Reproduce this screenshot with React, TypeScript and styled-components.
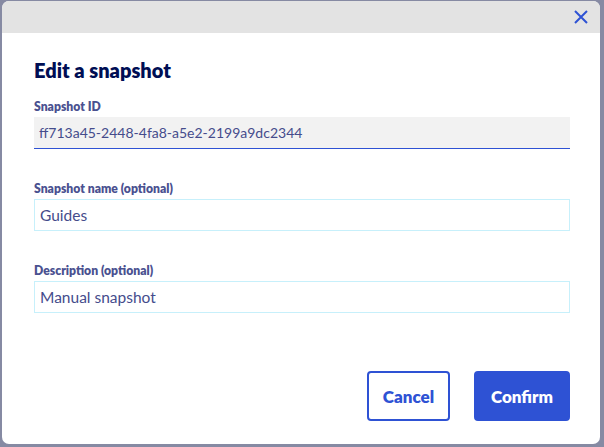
import styled, { createGlobalStyle } from "styled-components";

const GlobalStyle = createGlobalStyle`
  html, body {
    margin: 0;
    padding: 0;
    background: #868aa3;
  }
  body {
    font-family: Lato, "Noto Sans", sans-serif;
  }
  * {
    box-sizing: border-box;
  }
`;

const Backdrop = styled.div`
  width: 604px;
  height: 447px;
  padding: 1px 4px 3px 2px;
  background: #868aa3;
`;

const Modal = styled.div`
  width: 598px;
  height: 443px;
  background: #fff;
  border-radius: 7px;
  overflow: hidden;
  display: flex;
  flex-direction: column;
`;

const Header = styled.div`
  height: 32px;
  background: #e3e3e3;
  display: flex;
  justify-content: flex-end;
  align-items: center;
  padding-right: 10px;
`;

const CloseButton = styled.button`
  border: none;
  background: none;
  padding: 0;
  width: 18px;
  height: 18px;
  display: flex;
  align-items: center;
  justify-content: center;
  color: #2e52d4;
  cursor: pointer;
`;

const Body = styled.div`
  flex: 1;
  padding: 24px 30px 23px 32px;
  display: flex;
  flex-direction: column;
`;

const Title = styled.h2`
  margin: 0 0 17px;
  font-size: 20px;
  font-weight: 800;
  color: #000e54;
  line-height: 26px;
`;

const Field = styled.div`
  display: flex;
  flex-direction: column;
  margin-bottom: 33px;
`;

const Label = styled.label`
  font-size: 12.2px;
  font-weight: 800;
  color: #4a5190;
  line-height: 14px;
  margin-bottom: 3px;
`;

const Input = styled.input<{ $readOnly?: boolean }>`
  height: 32px;
  width: 100%;
  padding: 0 5px;
  font-family: inherit;
  font-size: ${(p) => (p.$readOnly ? "14px" : "15.5px")};
  color: #454c8c;
  outline: none;
  border-radius: 0;
  border-style: solid;
  border-width: ${(p) => (p.$readOnly ? "0 0 1px 0" : "1px")};
  border-color: ${(p) => (p.$readOnly ? "#2e52d4" : "#c7f0fb")};
  background: ${(p) => (p.$readOnly ? "#f2f2f2" : "#fff")};
`;

const Actions = styled.div`
  margin-top: auto;
  display: flex;
  justify-content: flex-end;
  gap: 24px;
`;

const Button = styled.button<{ $primary?: boolean }>`
  height: 50px;
  padding: 0 12px;
  border-radius: 4px;
  font-family: inherit;
  font-size: 17px;
  font-weight: 800;
  cursor: pointer;
  border: 2px solid #2e52d4;
  background: ${(p) => (p.$primary ? "#2e52d4" : "#fff")};
  color: ${(p) => (p.$primary ? "#fff" : "#2e52d4")};
  min-width: ${(p) => (p.$primary ? "96px" : "83px")};
`;

export default function App() {
  return (
    <>
      <GlobalStyle />
      <Backdrop>
        <Modal>
          <Header>
            <CloseButton aria-label="Close">
              <svg width="14" height="14" viewBox="0 0 14 14">
                <path d="M1 1L13 13M13 1L1 13" stroke="currentColor" strokeWidth="2" />
              </svg>
            </CloseButton>
          </Header>
          <Body>
            <Title>Edit a snapshot</Title>
            <Field>
              <Label>Snapshot ID</Label>
              <Input $readOnly readOnly value="ff713a45-2448-4fa8-a5e2-2199a9dc2344" />
            </Field>
            <Field>
              <Label>Snapshot name (optional)</Label>
              <Input defaultValue="Guides" />
            </Field>
            <Field>
              <Label>Description (optional)</Label>
              <Input defaultValue="Manual snapshot" />
            </Field>
            <Actions>
              <Button>Cancel</Button>
              <Button $primary>Confirm</Button>
            </Actions>
          </Body>
        </Modal>
      </Backdrop>
    </>
  );
}
